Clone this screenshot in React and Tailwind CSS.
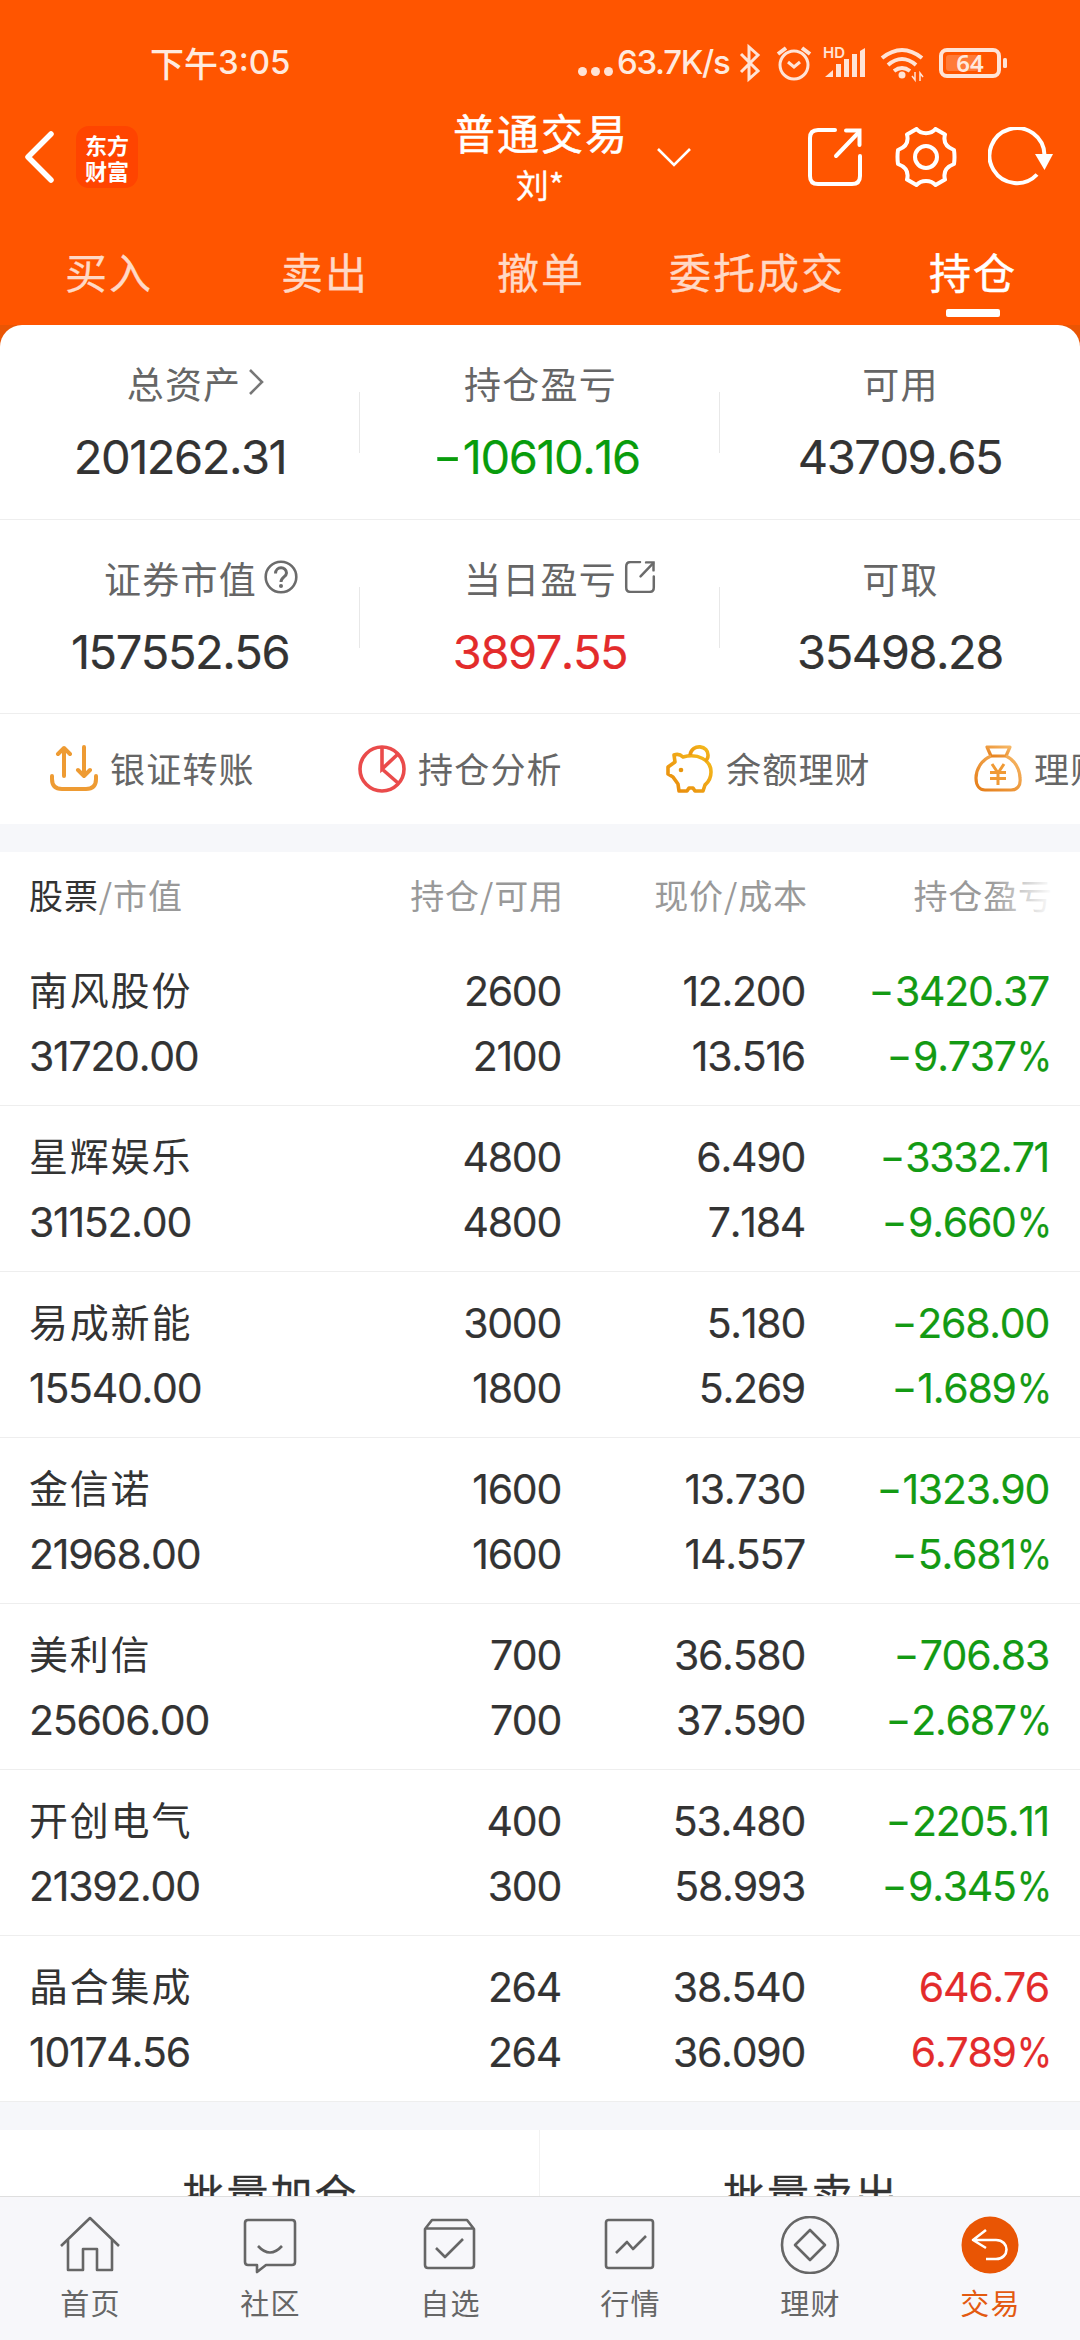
import React from "react";

const stats = [
  [
    { label: "总资产", value: "201262.31", tone: "text-[#333333]", icon: "chevron" },
    { label: "持仓盈亏", value: "-10610.16", tone: "text-[#089c0c]" },
    { label: "可用", value: "43709.65", tone: "text-[#333333]" },
  ],
  [
    { label: "证券市值", value: "157552.56", tone: "text-[#333333]", icon: "help" },
    { label: "当日盈亏", value: "3897.55", tone: "text-[#e32b2b]", icon: "share" },
    { label: "可取", value: "35498.28", tone: "text-[#333333]" },
  ],
];

const holdings = [
  ["南风股份", "31720.00", "2600", "2100", "12.200", "13.516", "-3420.37", "-9.737%"],
  ["星辉娱乐", "31152.00", "4800", "4800", "6.490", "7.184", "-3332.71", "-9.660%"],
  ["易成新能", "15540.00", "3000", "1800", "5.180", "5.269", "-268.00", "-1.689%"],
  ["金信诺", "21968.00", "1600", "1600", "13.730", "14.557", "-1323.90", "-5.681%"],
  ["美利信", "25606.00", "700", "700", "36.580", "37.590", "-706.83", "-2.687%"],
  ["开创电气", "21392.00", "400", "300", "53.480", "58.993", "-2205.11", "-9.345%"],
  ["晶合集成", "10174.56", "264", "264", "38.540", "36.090", "646.76", "6.789%"],
];

function Num({ children }) {
  const negative = children.startsWith("-");
  const percent = children.endsWith("%");
  const digits = children.replace(/^-|%$/g, "");
  return (
    <span className="whitespace-nowrap font-['Inter','Noto_Sans_CJK_SC',sans-serif] tracking-[-0.031em] [font-kerning:none] [-webkit-text-stroke:0.2px_currentColor]">
      {negative && <span className="mr-[0.05em] inline-block origin-right scale-x-[1.35]">-</span>}
      {digits}
      {percent && <span className="-ml-[0.1em] -mr-[0.04em] inline-block origin-right scale-x-[0.88]">%</span>}
    </span>
  );
}

function StatusIcons() {
  return (
    <svg width="275" height="40" viewBox="735 43 275 40" fill="none" stroke="#ffe3d6" strokeWidth="3">
      <path d="M740 54 L757 71 L748 79 V47 L757 55 L740 72" strokeWidth="3" />
      <circle cx="793" cy="65" r="14" />
      <path d="M787 62 L793 67 L799 62" />
      <path d="M777 54 L785 48 M801 48 L809 54" strokeWidth="4" />
      <g fill="#ffe3d6" stroke="none">
        <path d="M824 77 L832 70 V77 Z" />
        <rect x="835" y="64" width="5" height="13" />
        <rect x="843" y="59" width="5" height="18" />
        <rect x="851" y="54" width="5" height="23" />
        <path d="M859 51 L864 48 V77 H859 Z" />
        <text x="822" y="58" fontSize="15" fontWeight="600" fontFamily="Inter">HD</text>
      </g>
      <path d="M881 58 Q901 42 921 58 M887 65 Q901 53 915 65 M893 71 Q901 65 909 71" strokeWidth="4" />
      <circle cx="901" cy="75" r="3.5" fill="#ffe3d6" stroke="none" />
      <path d="M914 72 V80 L911 76 M919 81 V73 L922 77" strokeWidth="1.5" />
      <rect x="940" y="50" width="58" height="26" rx="6" strokeWidth="4" />
      <rect x="945" y="55" width="32" height="16" rx="3" fill="#ff7a38" stroke="none" />
      <rect x="1002" y="58" width="4" height="10" rx="1.5" fill="#ffe3d6" stroke="none" />
      <text x="969" y="71.500" textAnchor="middle" fontSize="24" fontWeight="600" fontFamily="Noto Sans" fill="#ffe9de" stroke="none">64</text>
    </svg>
  );
}

function ShareIcon({ className, strokeWidth = 4 }) {
  return (
    <svg className={className} viewBox="0 0 54 58" fill="none" stroke="currentColor" strokeWidth={strokeWidth} strokeLinecap="round" strokeLinejoin="miter">
      <path d="M27 2 H10 Q2 2 2 10 V48 Q2 56 10 56 H44 Q52 56 52 48 V28" />
      <path d="M38 2.500 H51.500 V17" />
      <path d="M51 4 L28 28" />
    </svg>
  );
}

function GearIcon() {
  return (
    <svg width="62" height="60" viewBox="-31 -30 62 60" fill="none" stroke="currentColor" strokeWidth="4" strokeLinejoin="round">
      <path d="M-9.500 -28 C-5 -22.500 5 -22.500 9.500 -28 L19 -22.500 C17 -15 20 -10 28 -7 Q29 0 28 7 C20 10 17 15 19 22.500 L9.500 28 C5 22.500 -5 22.500 -9.500 28 L-19 22.500 C-17 15 -20 10 -28 7 Q-29 0 -28 -7 C-20 -10 -17 -15 -19 -22.500 Z" />
      <circle r="11" />
    </svg>
  );
}

function RefreshIcon() {
  return (
    <svg width="66" height="60" viewBox="0 0 66 60" fill="none" stroke="currentColor" strokeWidth="4">
      <path d="M49 47.500 A27.500 27.500 0 1 1 56.500 28" />
      <path d="M47 27 H65 L56.500 43 Z" fill="currentColor" stroke="none" />
    </svg>
  );
}

function LabelIcon({ type }) {
  if (type === "chevron")
    return (
      <svg className="absolute left-full top-1/2 ml-[6px] -mt-[15px]" width="18" height="28" viewBox="0 0 18 28" fill="none" stroke="#777" strokeWidth="2.600">
        <path d="M3 2 L15 14 L3 26" />
      </svg>
    );
  if (type === "help")
    return (
      <svg className="absolute left-full top-1/2 ml-[7px] -mt-[18px]" width="34" height="34" viewBox="0 0 34 34" fill="none" stroke="#6b6b6b" strokeWidth="2.600">
        <circle cx="17" cy="17" r="15.300" />
        <path d="M11.500 13.500 C11.500 6 22.500 6 22.500 13 C22.500 17 17 17 17 22" strokeWidth="3" />
        <circle cx="17" cy="26" r="2" fill="#6b6b6b" stroke="none" />
      </svg>
    );
  return <ShareIcon className="absolute left-full top-1/2 ml-[7px] -mt-[17px] h-[32px] w-[32px] text-[#6b6b6b]" strokeWidth={4.5} />;
}

function TransferIcon() {
  return (
    <svg width="48" height="48" viewBox="0 0 48 48" fill="none" stroke="#ee9b33" strokeWidth="4" strokeLinecap="round" strokeLinejoin="round">
      <path d="M2 31 V34 Q2 44 12 44 H36 Q46 44 46 34 V31" />
      <path d="M14 31 V3 M8 9 L14 3 L20 9 M34 2 V31 M28 25 L34 31 L40 25" />
    </svg>
  );
}

function PieIcon() {
  return (
    <svg width="48" height="48" viewBox="0 0 48 48" fill="none" stroke="#ea4b4b" strokeWidth="3.600">
      <circle cx="24" cy="24" r="22" />
      <path d="M24 2 V24 L40 9 M24 24 L40 38" />
    </svg>
  );
}

function PiggyIcon() {
  return (
    <svg width="48" height="48" viewBox="0 0 48 48" fill="none" stroke="url(#pig)" strokeWidth="3.600" strokeLinejoin="round">
      <defs>
        <linearGradient id="pig" x1="0" y1="1" x2="1" y2="0">
          <stop offset="0" stopColor="#e8890c" />
          <stop offset="1" stopColor="#f5bc1d" />
        </linearGradient>
      </defs>
      <path d="M8 10 Q13 8 17 12 C32 8 45 15 45 27 Q45 35 39 40 L37 46 H29 L27 43 L23 43 L21 46 H13 L12 39 L7 32 L2 29 V22 L9 17 Z" />
      <path d="M24 10 C26 -2 43 0 42 11 Q42 14 39 16" />
      <circle cx="15" cy="25" r="2.300" fill="#e8950c" stroke="none" />
    </svg>
  );
}

function BagIcon() {
  return (
    <svg width="48" height="48" viewBox="0 0 48 48" fill="none" stroke="url(#bag)" strokeWidth="3.200" strokeLinejoin="round">
      <defs>
        <linearGradient id="bag" x1="0" y1="1" x2="1" y2="0">
          <stop offset="0" stopColor="#e57d18" />
          <stop offset="1" stopColor="#f6b765" />
        </linearGradient>
      </defs>
      <path d="M13 2 H36 L32 11 H17 Z" />
      <path d="M17 11 C7 15 2 25 2 33 C2 41 6 45 11 45 H37 C43 45 47 41 46 33 C46 25 41 15 32 11" />
      <path d="M18 19 L24 28 L30 19 M24 28 V40 M16 27.500 H32 M16 33.500 H32" stroke="#f09a35" strokeWidth="3" />
    </svg>
  );
}

const quick = [
  ["银证转账", TransferIcon],
  ["持仓分析", PieIcon],
  ["余额理财", PiggyIcon],
  ["理财", BagIcon],
];

const navIcons = {
  首页: (
    <>
      <path d="M1 30 L30 2 L59 30" />
      <path d="M8 24 V54 H23 V33 H37 V54 H52 V24" />
    </>
  ),
  社区: (
    <>
      <path d="M8 4 H52 Q55 4 55 7 V46 Q55 49 52 49 H26 L17 56 V49 H8 Q5 49 5 46 V7 Q5 4 8 4 Z" />
      <path d="M18 30 Q30 43 42 30" />
    </>
  ),
  自选: (
    <>
      <path d="M5 13 L12 4 H47 L54 13 V49 Q54 52 51 52 H8 Q5 52 5 49 Z M5 12.500 H54" />
      <path d="M16 32 L25 41 L43 23" />
    </>
  ),
  行情: (
    <>
      <rect x="6" y="4" width="47" height="48" rx="2.500" />
      <path d="M16 37 L27 26 L33 33 L46 20" />
    </>
  ),
  理财: (
    <>
      <circle cx="30" cy="29" r="28" />
      <path d="M30 14 L45 29 L30 44 L15 29 Z" />
    </>
  ),
  交易: (
    <>
      <circle cx="30" cy="29" r="28.500" fill="#e95504" stroke="none" />
      <path d="M13 24 H36 C50 24 50 43 36 43 H26 M26 14 L13 24 L26 32" stroke="#fff" />
    </>
  ),
};

export default function App() {
  return (
    <div className="flex h-[2340px] w-[1080px] flex-col overflow-hidden bg-white font-['Noto_Sans_CJK_SC',sans-serif] text-[#333333]">
      <header className="flex h-[325px] shrink-0 flex-col bg-[#ff5500] text-white">
        <div className="flex h-[99px] items-center justify-between pl-[150px] pr-[69px] pt-[26px] text-[#ffeadf]">
          <div className="flex items-center text-[34px] font-medium leading-none">
            下午<span className="font-['Inter'] text-[33px]">3:05</span>
          </div>
          <div className="flex items-center">
            <span className="mr-1 mt-[18px] flex gap-[4px]">
              <i className="size-[9px] rounded-full bg-[#ffe3d6]" />
              <i className="size-[9px] rounded-full bg-[#ffe3d6]" />
              <i className="size-[9px] rounded-full bg-[#ffe3d6]" />
            </span>
            <span className="mr-[4px] w-[115px] whitespace-nowrap font-['Inter'] text-[33px] font-medium leading-none tracking-[-0.04em]">63.7K/s</span>
            <StatusIcons />
          </div>
        </div>
        <div className="grid h-[116px] grid-cols-[1fr_auto_1fr] items-center">
          <div className="flex items-center">
            <svg className="ml-[24px]" width="32" height="54" viewBox="0 0 32 54" fill="none" stroke="#fff" strokeWidth="5.500" strokeLinecap="round" strokeLinejoin="round">
              <path d="M27 4 L4 27 L27 50" />
            </svg>
            <div className="ml-[20px] flex size-[62px] flex-col items-center justify-center rounded-[13px] bg-[#ff4400] text-[22px] font-bold leading-[26px]">
              <span>东方</span>
              <span>财富</span>
            </div>
          </div>
          <div className="relative flex flex-col items-center">
            <span className="ml-[2px] text-[42px] leading-[55px] tracking-[2px] [-webkit-text-stroke:0.5px_currentColor]">普通交易</span>
            <span className="text-[33px] leading-[51px] [-webkit-text-stroke:0.3px_currentColor]">刘*</span>
            <svg className="absolute left-full top-[43px] ml-[27px]" width="36" height="22" viewBox="0 0 36 22" fill="none" stroke="#fff" strokeWidth="2.600">
              <path d="M2 2 L18 18 L34 2" />
            </svg>
          </div>
          <div className="flex items-center justify-end gap-[33px] pr-[26px]">
            <ShareIcon className="h-[58px] w-[54px]" />
            <GearIcon />
            <span className="-ml-[2px]"><RefreshIcon /></span>
          </div>
        </div>
        <nav className="grid h-[110px] grid-cols-5 text-[42px] leading-[60px] tracking-[2px] text-[#ffd9c6]">
          {["买入", "卖出", "撤单", "委托成交", "持仓"].map((t, i) => (
            <div key={t} className={i === 4 ? "flex flex-col items-center pt-[26px] pl-[2px] text-white" : "flex flex-col items-center pt-[26px] pl-[2px]"}>
              <span className={i === 4 ? "[-webkit-text-stroke:0.5px_currentColor]" : "[-webkit-text-stroke:0.3px_currentColor]"}>{t}</span>
              {i === 4 && <span className="mt-[8px] h-[8px] w-[54px] rounded-[2px] bg-white" />}
            </div>
          ))}
        </nav>
      </header>

      <div className="shrink-0 bg-[#ea5504]">
        <section className="rounded-t-[22px] bg-white">
          {stats.map((row, r) => (
            <div key={r} className={r === 0 ? "grid h-[195px] grid-cols-3 border-b border-[#eeeeee]" : "grid h-[194px] grid-cols-3 border-b border-[#eeeeee]"}>
              {row.map((s, c) => (
                <div key={s.label} className="flex">
                  <div className="flex flex-1 flex-col items-center pt-[30px]">
                    <div className={s.icon === "chevron" ? "relative ml-[8px] text-[37px] leading-[56px] tracking-[1.2px] text-[#666666]" : "relative ml-[1px] text-[37px] leading-[56px] tracking-[1.2px] text-[#666666]"}>
                      {s.label}
                      {s.icon && <LabelIcon type={s.icon} />}
                    </div>
                    <div className={"mt-[13px] text-[47px] leading-[60px] " + s.tone}>
                      <Num>{s.value}</Num>
                    </div>
                  </div>
                  {c < 2 && <span className="-ml-px mt-[67px] h-[61px] w-px bg-[#e8e8e8]" />}
                </div>
              ))}
            </div>
          ))}
          <div className="flex h-[110px] items-center overflow-hidden pl-[50px]">
            {quick.map(([t, Icon]) => (
              <div key={t} className="flex w-[308px] shrink-0 items-center gap-[12px] text-[35px] leading-[50px] tracking-[1.200px] text-[#666666]">
                <Icon />
                <span className="-mt-[3px]">{t}</span>
              </div>
            ))}
          </div>
        </section>
      </div>

      <div className="h-[28px] shrink-0 bg-[#f6f7fa]" />

      <div className="relative grid h-[88px] shrink-0 grid-cols-[260px_275px_244px_245px] items-center pb-[3px] pl-[29px] text-right text-[34px] tracking-[0.9px] text-[#999999]">
        <div className="text-left"><span className="text-[#333333]">股票</span>/市值</div>
        <div>持仓/可用</div>
        <div>现价/成本</div>
        <div>持仓盈亏</div>
        <span className="absolute right-0 top-0 h-full w-[90px] bg-linear-to-l from-white from-30% to-transparent" />
      </div>

      {holdings.map((h) => {
        const tone = h[6].startsWith("-") ? "text-[#139a13]" : "text-[#e32b2b]";
        return (
          <div key={h[0]} className="grid h-[166px] shrink-0 grid-cols-[260px_272px_244px_244px] grid-rows-[66px_60px] content-start border-b border-[#eeeeee] pl-[29px] pt-[15px] text-right text-[41px] leading-[66px]">
            <div className="text-left text-[39px] tracking-[1.800px]">{h[0]}</div>
            <div><Num>{h[2]}</Num></div>
            <div><Num>{h[4]}</Num></div>
            <div className={tone}><Num>{h[6]}</Num></div>
            <div className="-mt-[1px] text-left"><Num>{h[1]}</Num></div>
            <div className="-mt-[1px]"><Num>{h[3]}</Num></div>
            <div className="-mt-[1px]"><Num>{h[5]}</Num></div>
            <div className={"-mt-[1px] " + tone}><Num>{h[7]}</Num></div>
          </div>
        );
      })}

      <div className="h-[28px] shrink-0 bg-[#f6f7fa]" />

      <div className="grid h-[66px] shrink-0 grid-cols-2 overflow-hidden text-center text-[42px] leading-[60px] tracking-[2px] [-webkit-text-stroke:0.3px_currentColor]">
        <div className="border-r border-[#f2f2f2] pl-[2px] pt-[32px]">批量加仓</div>
        <div className="pl-[2px] pt-[32px]">批量卖出</div>
      </div>

      <footer className="grid h-[144px] shrink-0 grid-cols-6 border-t border-[#dedede] bg-[#f7f7fa]">
        {Object.entries(navIcons).map(([t, icon]) => (
          <div key={t} className={t === "交易" ? "flex flex-col items-center pt-[19px] text-[#e35a10]" : "flex flex-col items-center pt-[19px] text-[#666666]"}>
            <svg width="60" height="58" viewBox="0 0 60 58" fill="none" stroke="currentColor" strokeWidth="2.600" strokeLinejoin="round">
              {icon}
            </svg>
            <span className="ml-[1px] mt-[6px] text-[29px] leading-[44px] tracking-[1.300px]">{t}</span>
          </div>
        ))}
      </footer>
    </div>
  );
}
